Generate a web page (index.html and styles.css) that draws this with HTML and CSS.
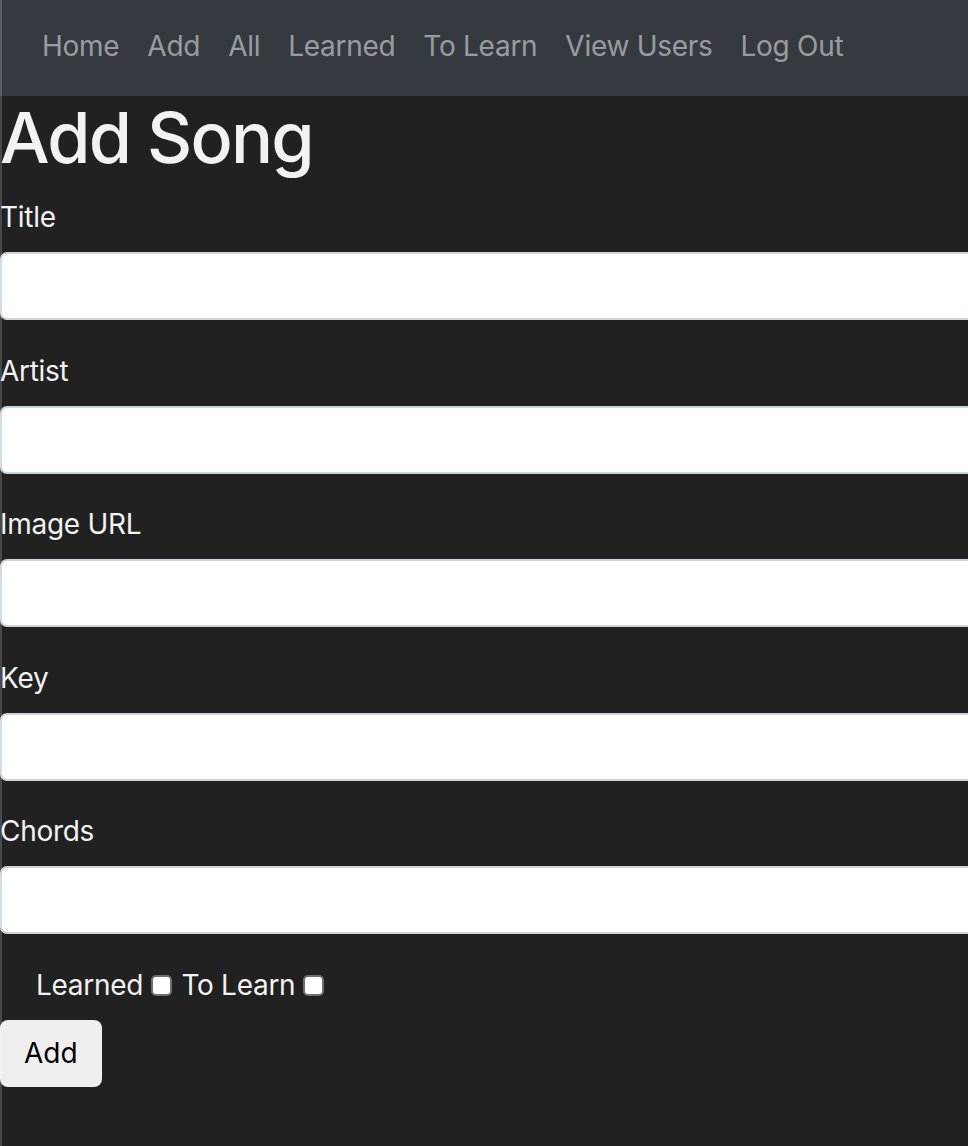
FILE: index.html
```html
<!DOCTYPE html>
<html lang="en">
<head>
  <meta charset="UTF-8" />
  <meta name="viewport" content="width=device-width, initial-scale=1.0" />
  <title>Add Song</title>
  <link rel="stylesheet" href="styles.css">
</head>
<body>
  <nav class="navbar">
    <a href="#" class="nav-link">Home</a>
    <a href="#" class="nav-link">Add</a>
    <a href="#" class="nav-link">All</a>
    <a href="#" class="nav-link">Learned</a>
    <a href="#" class="nav-link">To Learn</a>
    <a href="#" class="nav-link">View Users</a>
    <a href="#" class="nav-link">Log Out</a>
  </nav>

  <h1>Add Song</h1>
  <form id="songForm">
    <div class="form-group">
      <label for="title">Title</label>
      <input type="text" id="title" class="form-control" />
    </div>
    <div class="form-group">
      <label for="artist">Artist</label>
      <input type="text" id="artist" class="form-control" />
    </div>
    <div class="form-group">
      <label for="image">Image URL</label>
      <input type="text" id="image" class="form-control" />
    </div>
    <div class="form-group">
      <label for="key">Key</label>
      <input type="text" id="key" class="form-control" />
    </div>
    <div class="form-group">
      <label for="chords">Chords</label>
      <input type="text" id="chords" class="form-control" />
    </div>

    <div class="form-check">
      <label>Learned <input type="checkbox" id="learned" /></label>
      <label>To Learn <input type="checkbox" id="toLearn" /></label>
    </div>

    <button type="submit" class="add-button">Add</button>
  </form>
</body>
</html>
```

FILE: styles.css
```css
* {
  box-sizing: border-box;
}

html {
  overflow-x: hidden;
}

body {
  margin: 0;
  min-height: 1146px;
  font-family: Inter, "Liberation Sans", sans-serif;
  font-size: 28px;
  line-height: 1.5;
  letter-spacing: -0.28px;
  color: #f2f2f2;
  background-color: #212121;
  overflow-x: hidden;
}

/* thin window edge on the left */
body::after {
  content: "";
  position: fixed;
  top: 0;
  left: 0;
  width: 2px;
  height: 100%;
  background-color: rgba(255, 255, 255, 0.18);
}

.navbar {
  display: flex;
  height: 96px;
  padding: 25px 28px 29px;
  background-color: #343a40;
}

.nav-link {
  padding: 0 14px;
  color: rgba(255, 255, 255, 0.5);
  text-decoration: none;
}

h1 {
  margin: 0 0 14px;
  font-size: 70px;
  font-weight: 500;
  line-height: 84px;
  letter-spacing: -1.8px;
}

.form-group {
  margin-bottom: 27.5px;
}

.form-group label {
  display: block;
  height: 44px;
  padding-top: 2px;
  line-height: 42px;
  margin-bottom: 14px;
}

.form-control {
  display: block;
  width: 1000px;
  height: 68px;
  padding: 10px 21px;
  border: 2px solid #ced4da;
  border-radius: 7px;
  background-color: #ffffff;
  font-size: 28px;
}

.form-check {
  height: 44px;
  padding: 2px 0 0 36px;
  line-height: 42px;
}

.form-check input {
  appearance: none;
  width: 21px;
  height: 21px;
  margin: 0 2px 0 0;
  vertical-align: -1px;
  border: 2px solid #6f6f6f;
  border-radius: 5px;
  background-color: #ffffff;
}

.add-button {
  margin-top: 14px;
  height: 67px;
  padding: 0 24px;
  border: none;
  border-radius: 8px;
  background-color: #efefef;
  color: #000000;
  font-family: inherit;
  font-size: 28px;
}
```
